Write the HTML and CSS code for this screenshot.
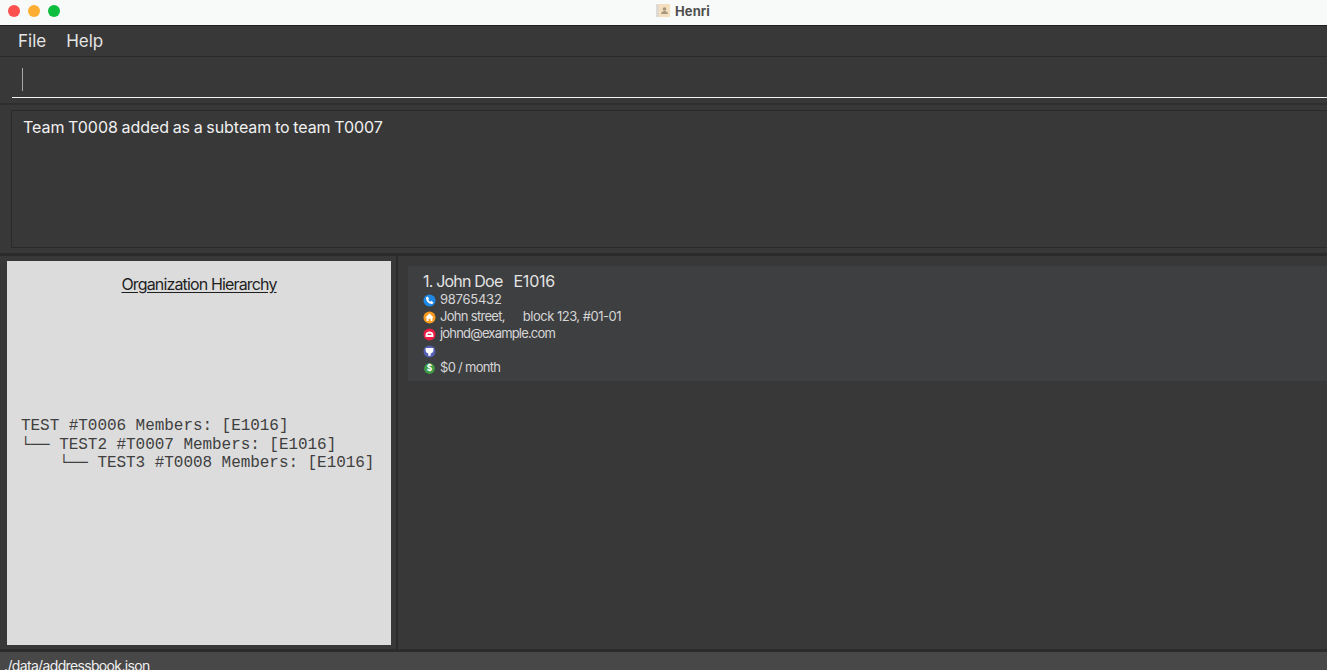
FILE: index.html
```html
<!DOCTYPE html>
<html lang="en">
<head>
<meta charset="utf-8">
<title>Henri</title>
<link rel="stylesheet" href="styles.css">
</head>
<body>
<div class="window">
  <header class="titlebar">
    <div class="lights">
      <span class="light red"></span>
      <span class="light yellow"></span>
      <span class="light green"></span>
    </div>
    <div class="title">
      <svg class="title-icon" width="14" height="13" viewBox="0 0 14 13">
        <rect x="0" y="0" width="14" height="13" fill="#dedad3"/>
        <rect x="3" y="0" width="11" height="13" fill="#f3dfbd"/>
        <circle cx="8.5" cy="5" r="1.800" fill="#a8977f"/>
        <path d="M5 10c0-2 2-3 3.500-3s3.500 1 3.500 3z" fill="#a8977f"/>
      </svg>
      <span>Henri</span>
    </div>
  </header>
  <nav class="menubar">
    <span class="menu-item">File</span>
    <span class="menu-item">Help</span>
  </nav>
  <section class="command">
    <div class="command-field"><span class="caret"></span></div>
  </section>
  <section class="result-pane">
    <div class="result-box">Team T0008 added as a subteam to team T0007</div>
  </section>
  <main class="split">
    <aside class="left">
      <div class="org-card">
        <h1 class="org-title">Organization Hierarchy</h1>
        <pre class="tree">TEST #T0006 Members: [E1016]
└── TEST2 #T0007 Members: [E1016]
    └── TEST3 #T0008 Members: [E1016]</pre>
      </div>
    </aside>
    <section class="right">
      <article class="person">
        <div class="person-name"><span class="name">1. John Doe</span><span class="emp-id">E1016</span></div>
        <div class="row">
          <svg class="ico" viewBox="0 0 14 14"><circle cx="7" cy="7" r="6.500" fill="#1e88e5"/><path d="M3.300 3.900l1.700-1.200 1.700 2.500-1 1c.4 1 1.100 1.800 2.100 2.200l1-1 2.500 1.700-1.200 1.700c-3.800.4-7.200-3.100-6.800-6.900z" fill="#fff"/></svg>
          <span class="digits">98765432</span>
        </div>
        <div class="row">
          <svg class="ico" viewBox="0 0 14 14"><circle cx="7" cy="7" r="6.500" fill="#fb9b1e"/><path d="M7 2.800l4.500 4.200h-1.300v3.800H8.100V8.300H5.900v2.500H3.800V7H2.500z" fill="#fff"/></svg>
          <span class="addr">John street,</span><span class="block">block 123, #01-01</span>
        </div>
        <div class="row">
          <svg class="ico" viewBox="0 0 14 14"><circle cx="7" cy="7" r="6.500" fill="#ee1c45"/><path d="M2.800 9.800V7.200C2.800 5 5 3.800 7 3.800s4.200 1.200 4.200 3.400v2.600z" fill="#fff"/><rect x="5" y="6.200" width="4" height="1.300" fill="#ee1c45"/></svg>
          <span class="email">johnd@example.com</span>
        </div>
        <div class="row">
          <svg class="ico" viewBox="0 0 14 14"><circle cx="7" cy="7" r="6.500" fill="#5560b5"/><path d="M2.800 3.200h8.400v2.800c0 1.700-1.500 2.800-2.900 3.200v2.300H5.700V9.200C4.300 8.800 2.800 7.700 2.800 6z" fill="#fff"/></svg>
        </div>
        <div class="row">
          <svg class="ico" viewBox="0 0 14 14"><circle cx="7" cy="7" r="5.800" fill="#3f9c46"/><text class="dollar" x="7" y="10" text-anchor="middle">$</text></svg>
          <span>$0 / month</span>
        </div>
      </article>
    </section>
  </main>
  <footer class="status">./data/addressbook.json</footer>
</div>
</body>
</html>
```

FILE: styles.css
```css
* { box-sizing: border-box; }
html, body { margin: 0; height: 100%; overflow: hidden; }
body { font-family: "Inter", "Liberation Sans", sans-serif; background: #383838; }

.window { width: 1327px; height: 670px; display: flex; flex-direction: column; overflow: hidden; background: #383838; }

.titlebar { height: 26px; flex: none; position: relative; background: #f8f9f9; border-bottom: 1px solid #1f1f1f; display: flex; align-items: center; justify-content: center; }
.lights { position: absolute; left: 8px; top: 5px; display: flex; gap: 8px; }
.light { width: 12px; height: 12px; border-radius: 50%; }
.red { background: #fd5150; }
.yellow { background: #fdae32; }
.green { background: #0cbd3e; }
.title { display: flex; align-items: center; gap: 5px; font-size: 13px; font-weight: 700; color: #4f4f4f; margin: -4px 0 0 39px; letter-spacing: 0.1px; }
.title-icon { display: block; }

.menubar { height: 31px; flex: none; display: flex; align-items: center; gap: 20px; padding-left: 18px; border-bottom: 1px solid #2a2a2a; color: #e4e4e4; font-size: 17px; }

.command { height: 48px; flex: none; padding: 0 0 5px 12px; border-bottom: 2px solid #2e2e2e; }
.command-field { height: 41px; border-bottom: 1px solid #f2f2f2; padding: 11px 0 0 10px; }
.caret { display: block; width: 1px; height: 23px; background: #a8a8a8; }

.result-pane { height: 151px; flex: none; padding: 5px 0 5px 11px; border-bottom: 3px solid #2b2b2b; }
.result-box { height: 138px; border: 1px solid #2a2a2a; border-right: 0; padding: 6px 11px; color: #f0f0f0; font-size: 16px; line-height: 20px; letter-spacing: -0.05px; word-spacing: -0.75px; }

.split { flex: 1; min-height: 0; display: flex; }
.left { width: 398px; flex: none; padding: 5px 5px 0 7px; border-right: 2px solid #2b2b2b; }
.org-card { height: 384px; background: #dcdcdc; display: flex; flex-direction: column; }
.org-title { margin: 13px 0 0; text-align: center; font-size: 16px; font-weight: 400; line-height: 20px; letter-spacing: -0.85px; color: #1f1f1f; text-decoration: underline; text-underline-offset: 2px; }
.tree { margin: 123px 0 0 14px; font-family: "Liberation Mono", monospace; font-size: 16px; line-height: 18.500px; letter-spacing: -0.05px; color: #3f3f3f; }

.right { flex: 1; padding: 10px 0 0 10px; }
.person { height: 115px; background: #3e3f41; padding: 5px 15px; }
.person-name { display: flex; gap: 11px; font-size: 16px; line-height: 20px; height: 19px; color: #e4e4e4; }
.name { letter-spacing: -0.8px; }
.emp-id { letter-spacing: -0.2px; }
.row { display: flex; align-items: center; height: 17px; font-size: 13px; letter-spacing: -0.7px; color: #d6d6d6; }
.ico { width: 13px; height: 13px; margin: 3px 4px 0 0; flex: none; display: block; }
.dollar { font: 700 9px "Inter", sans-serif; fill: #fff; letter-spacing: 0; }
.digits { letter-spacing: -0.25px; }
.addr { margin-right: 18px; }
.block { letter-spacing: -0.5px; }
.email { letter-spacing: -0.82px; }

.status { height: 21px; flex: none; background: #484848; border-top: 3px solid #2b2b2b; padding: 5px 0 0 4px; color: #f0f0f0; font-size: 14px; line-height: 17px; letter-spacing: -0.65px; overflow: hidden; }
```
